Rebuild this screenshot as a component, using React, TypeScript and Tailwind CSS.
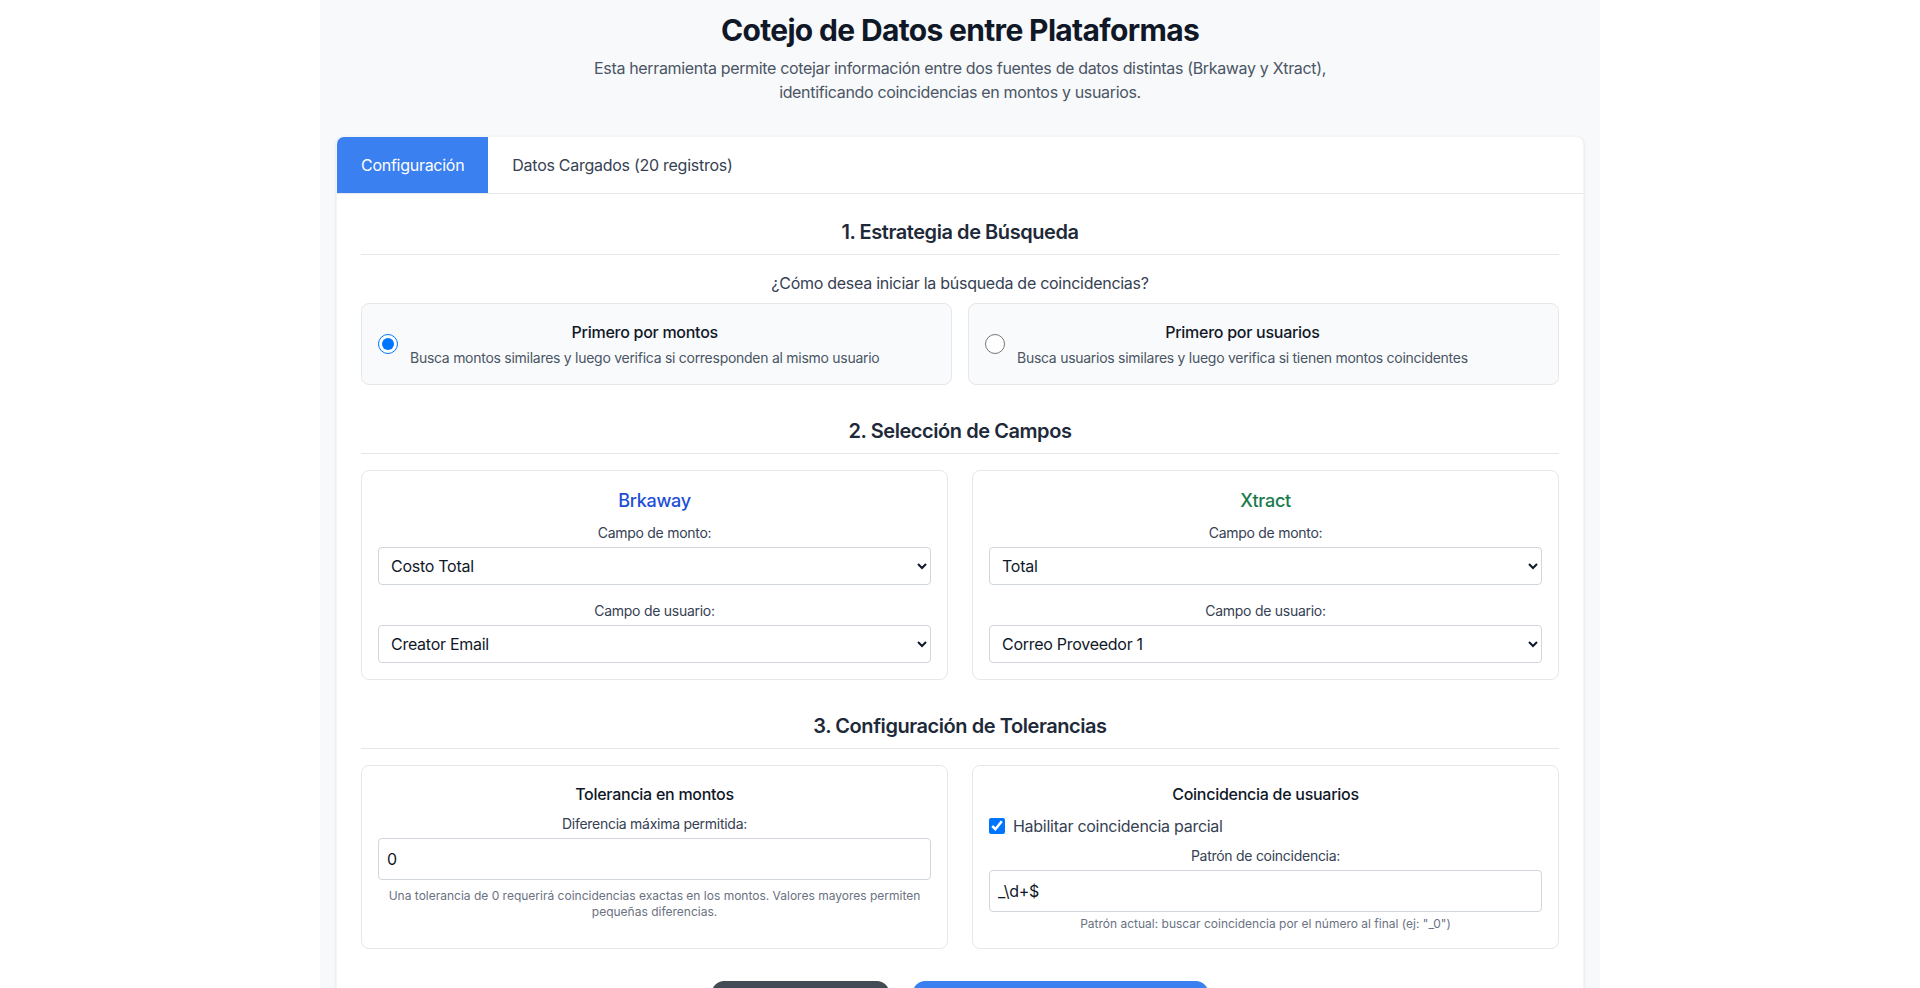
import React, { useState } from 'react';

const SectionTitle: React.FC<{ children: React.ReactNode }> = ({ children }) => (
  <h2 className="text-xl font-semibold text-gray-800 text-center pb-2 mb-4 border-b border-gray-200 tracking-[-0.022em]">
    {children}
  </h2>
);

const StrategyOption: React.FC<{
  checked: boolean;
  title: string;
  description: string;
  onSelect: () => void;
}> = ({ checked, title, description, onSelect }) => (
  <label className="flex items-center p-4 bg-gray-50 border border-gray-200 rounded-lg cursor-pointer">
    <input type="radio" name="strategy" checked={checked} onChange={onSelect} className="w-5 h-5 shrink-0" />
    <div className="ml-3 text-center">
      <div className="font-medium text-gray-900 mb-1">{title}</div>
      <div className="text-sm text-gray-600">{description}</div>
    </div>
  </label>
);

const FieldSelect: React.FC<{ label: string; value: string; options: string[]; last?: boolean }> = ({
  label,
  value,
  options,
  last,
}) => (
  <div className={last ? '' : 'mb-4'}>
    <label className="block text-sm text-gray-700 mb-1 text-center">{label}</label>
    <select
      defaultValue={value}
      className="w-full h-[38px] px-2 border border-gray-300 rounded bg-white text-gray-900"
    >
      {options.map((o) => (
        <option key={o}>{o}</option>
      ))}
    </select>
  </div>
);

const App: React.FC = () => {
  const [strategy, setStrategy] = useState<'montos' | 'usuarios'>('montos');
  const [partial, setPartial] = useState(true);

  return (
    <div className="min-h-screen bg-white font-['Inter',sans-serif] tracking-[-0.017em]">
      <div className="max-w-[1280px] mx-auto bg-[#f8f9fa] p-4 min-h-screen">
        <header className="text-center mb-8">
          <h1 className="text-3xl leading-[28px] font-bold text-gray-900 mb-3 tracking-[-0.022em]">
            Cotejo de Datos entre Plataformas
          </h1>
          <p className="text-gray-600 max-w-3xl mx-auto tracking-[-0.021em]">
            Esta herramienta permite cotejar información entre dos fuentes de datos distintas (Brkaway y Xtract),
            identificando coincidencias en montos y usuarios.
          </p>
        </header>

        <div className="bg-white rounded-lg shadow-sm border border-gray-100 overflow-hidden">
          <div className="flex border-b border-gray-200">
            <button className="px-6 py-4 bg-[#3b80f0] text-white">Configuración</button>
            <button className="px-6 py-4 text-gray-700">Datos Cargados (20 registros)</button>
          </div>

          <div className="p-6">
            {/* 1. Estrategia */}
            <section className="mb-8">
              <SectionTitle>1. Estrategia de Búsqueda</SectionTitle>
              <p className="text-center text-gray-700 mb-2">¿Cómo desea iniciar la búsqueda de coincidencias?</p>
              <div className="grid grid-cols-2 gap-4">
                <StrategyOption
                  checked={strategy === 'montos'}
                  onSelect={() => setStrategy('montos')}
                  title="Primero por montos"
                  description="Busca montos similares y luego verifica si corresponden al mismo usuario"
                />
                <StrategyOption
                  checked={strategy === 'usuarios'}
                  onSelect={() => setStrategy('usuarios')}
                  title="Primero por usuarios"
                  description="Busca usuarios similares y luego verifica si tienen montos coincidentes"
                />
              </div>
            </section>

            {/* 2. Campos */}
            <section className="mb-8">
              <SectionTitle>2. Selección de Campos</SectionTitle>
              <div className="grid grid-cols-2 gap-6">
                <div className="border border-gray-200 rounded-lg p-4">
                  <h3 className="text-lg font-medium text-[#1d4ed8] text-center mb-2">Brkaway</h3>
                  <FieldSelect label="Campo de monto:" value="Costo Total" options={['Costo Total', 'Subtotal']} />
                  <FieldSelect
                    label="Campo de usuario:"
                    value="Creator Email"
                    options={['Creator Email', 'Creator Name']}
                    last
                  />
                </div>
                <div className="border border-gray-200 rounded-lg p-4">
                  <h3 className="text-lg font-medium text-[#1b7a4c] text-center mb-2">Xtract</h3>
                  <FieldSelect label="Campo de monto:" value="Total" options={['Total', 'Subtotal']} />
                  <FieldSelect
                    label="Campo de usuario:"
                    value="Correo Proveedor 1"
                    options={['Correo Proveedor 1', 'Correo Proveedor 2']}
                    last
                  />
                </div>
              </div>
            </section>

            {/* 3. Tolerancias */}
            <section>
              <SectionTitle>3. Configuración de Tolerancias</SectionTitle>
              <div className="grid grid-cols-2 gap-6">
                <div className="border border-gray-200 rounded-lg p-4">
                  <h3 className="font-medium text-gray-900 text-center mb-2">Tolerancia en montos</h3>
                  <label className="block text-sm text-gray-700 mb-1 text-center">Diferencia máxima permitida:</label>
                  <input
                    type="number"
                    defaultValue={0}
                    className="w-full px-2 py-2 border border-gray-300 rounded text-gray-900"
                  />
                  <p className="text-xs text-gray-500 mt-2 text-center tracking-normal">
                    Una tolerancia de 0 requerirá coincidencias exactas en los montos. Valores mayores permiten
                    pequeñas diferencias.
                  </p>
                </div>
                <div className="border border-gray-200 rounded-lg p-4">
                  <h3 className="font-medium text-gray-900 text-center mb-2">Coincidencia de usuarios</h3>
                  <label className="flex items-center mb-2">
                    <input
                      type="checkbox"
                      checked={partial}
                      onChange={(e) => setPartial(e.target.checked)}
                      className="w-4 h-4"
                    />
                    <span className="ml-2 text-gray-700">Habilitar coincidencia parcial</span>
                  </label>
                  <label className="block text-sm text-gray-700 mb-1 text-center">Patrón de coincidencia:</label>
                  <input
                    type="text"
                    defaultValue="_\d+$"
                    className="w-full px-2 py-2 border border-gray-300 rounded text-gray-900"
                  />
                  <p className="text-xs text-gray-500 mt-1 text-center tracking-normal">
                    Patrón actual: buscar coincidencia por el número al final (ej: "_0")
                  </p>
                </div>
              </div>
            </section>

            <div className="flex justify-center gap-6 mt-8">
              <button className="w-[177px] py-3 bg-[#434b55] text-white rounded-xl font-medium">Limpiar Datos</button>
              <button className="w-[295px] py-3 bg-[#3b80f0] text-white rounded-xl font-medium">
                Realizar Cotejo de Datos
              </button>
            </div>
          </div>
        </div>
      </div>
    </div>
  );
};

export default App;
